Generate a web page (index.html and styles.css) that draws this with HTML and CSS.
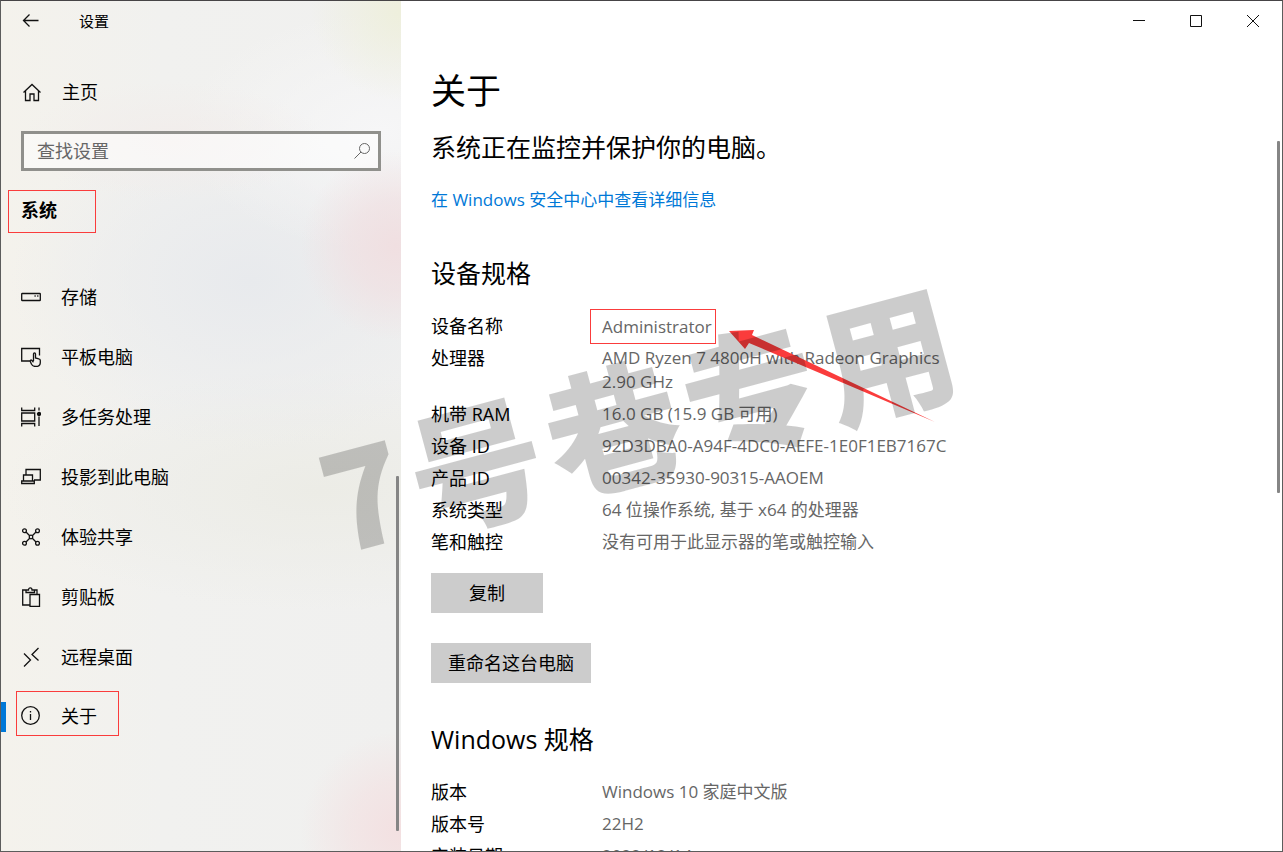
FILE: index.html
```html
<!DOCTYPE html>
<html lang="zh-CN">
<head>
<meta charset="utf-8">
<title>设置</title>
<meta name="viewport" content="width=device-width, initial-scale=1">
<link rel="stylesheet" href="styles.css">
</head>
<body>
<div class="window">
  <aside class="sidebar">
    <header class="titlebar">
      <button class="back" type="button" aria-label="返回">
        <svg class="icon" viewBox="0 0 20 20"><path d="M17.500 9.500H2.500M8.500 3.500l-6 6 6 6"/></svg>
      </button>
      <span class="app-title">设置</span>
    </header>
    <a class="home" href="#home">
      <svg class="icon" viewBox="0 0 20 20"><path d="M1.500 10.500L10 2.500l8.500 8M3.500 9v9.500h4.500v-6.500h4v6.500h4.500V9"/></svg>
      <span>主页</span>
    </a>
    <form class="search">
      <input class="search-input" type="text" placeholder="查找设置" aria-label="查找设置">
      <button class="search-button" type="button" aria-label="搜索">
        <svg class="icon" viewBox="0 0 20 20"><circle cx="12.500" cy="7.500" r="5"/><path d="M9 11L2.500 17.500"/></svg>
      </button>
    </form>
    <h2 class="category marked">系统</h2>
    <nav class="nav">
      <a class="nav-item" href="#storage">
        <svg class="icon" viewBox="0 0 20 20"><rect x=".7" y="6.500" width="18.600" height="7" rx=".6"/><path d="M13.500 9h1.200M16.200 9h1.200"/></svg>
        <span>存储</span>
      </a>
      <a class="nav-item" href="#tablet">
        <svg class="icon" viewBox="0 0 20 20"><path d="M9 14H.7V1.500h17.800V8.500M12.500 14V7c0-1.500 2-1.500 2 0V11l3.300.8c1 .2 1.500.8 1.500 1.700v2c0 2.500-1.800 4-4.500 4-2.200 0-3.500-.7-4.300-2.200L9.200 14.300c-.2-1 .7-1.700 1.500-1l1.800 2"/></svg>
        <span>平板电脑</span>
      </a>
      <a class="nav-item" href="#multitask">
        <svg class="icon" viewBox="0 0 20 20"><path d="M.7.500v3h13v-3M.7 19.500v-3h13v3M.7 6h13v8H.7zM18 .5v3M18 9.500v9.500"/><circle class="fill" cx="18" cy="7" r="1.500"/></svg>
        <span>多任务处理</span>
      </a>
      <a class="nav-item" href="#project">
        <svg class="icon" viewBox="0 0 20 20"><path d="M5 7.500V2.500h14.300v10.500H13M2.500 14V8h9v6M.7 14h12.600v2.500H.7z"/></svg>
        <span>投影到此电脑</span>
      </a>
      <a class="nav-item" href="#shared">
        <svg class="icon" viewBox="0 0 20 20"><circle cx="3.500" cy="3.800" r="1.900"/><circle cx="16.500" cy="3.800" r="1.900"/><circle cx="3.500" cy="16.200" r="1.900"/><circle cx="16.500" cy="16.200" r="1.900"/><circle cx="10" cy="10" r="1.800"/><path d="M5 5l3.700 3.700M15 5l-3.700 3.700M5 15l3.700-3.700M15 15l-3.700-3.700"/></svg>
        <span>体验共享</span>
      </a>
      <a class="nav-item" href="#clipboard">
        <svg class="icon" viewBox="0 0 20 20"><path d="M8.500 18H1.700V3H5M13 3h3v4.500M5 5.500V3h2.500C7.500.2 11 .2 11 3H13.500v2.500zM9 7.500h9.500v11.800H9z"/></svg>
        <span>剪贴板</span>
      </a>
      <a class="nav-item" href="#remote">
        <svg class="icon" viewBox="0 0 20 20"><path d="M17.500 1l-6.500 6.500L17.500 13.500M3 6.500l6.500 6.500L3 19.500"/></svg>
        <span>远程桌面</span>
      </a>
      <a class="nav-item current" href="#about" aria-current="page">
        <span class="marked about-mark">
          <svg class="icon" viewBox="0 0 20 20"><circle cx="9.500" cy="9.500" r="8.800"/><path d="M9.500 8v6M9.500 5v1.500"/></svg>
          <span>关于</span>
        </span>
      </a>
    </nav>
    <div class="thumb nav-thumb"></div>
  </aside>

  <main class="content">
    <div class="window-controls">
      <button type="button" aria-label="最小化"><svg viewBox="0 0 12 12"><path d="M0 5.500h12"/></svg></button>
      <button type="button" aria-label="最大化"><svg viewBox="0 0 12 12"><path d="M.5.500h11v11H.5z"/></svg></button>
      <button type="button" aria-label="关闭"><svg viewBox="0 0 12 12"><path d="M0 0l12 12M12 0L0 12"/></svg></button>
    </div>
    <h1 class="page-title">关于</h1>
    <p class="status">系统正在监控并保护你的电脑。</p>
    <a class="link" href="#security">在 Windows 安全中心中查看详细信息</a>

    <section class="section">
      <h2 class="section-title">设备规格</h2>
      <dl class="specs">
        <dt>设备名称</dt><dd><span class="marked name-mark">Administrator</span></dd>
        <dt>处理器</dt><dd>AMD Ryzen 7 4800H with Radeon Graphics<br>2.90 GHz</dd>
        <dt>机带 RAM</dt><dd>16.0 GB (15.9 GB 可用)</dd>
        <dt>设备 ID</dt><dd>92D3DBA0-A94F-4DC0-AEFE-1E0F1EB7167C</dd>
        <dt>产品 ID</dt><dd>00342-35930-90315-AAOEM</dd>
        <dt>系统类型</dt><dd>64 位操作系统, 基于 x64 的处理器</dd>
        <dt>笔和触控</dt><dd>没有可用于此显示器的笔或触控输入</dd>
      </dl>
      <div class="actions">
        <button class="button wide" type="button">复制</button>
        <button class="button" type="button">重命名这台电脑</button>
      </div>
    </section>

    <section class="section windows-section">
      <h2 class="section-title">Windows 规格</h2>
      <dl class="specs">
        <dt>版本</dt><dd>Windows 10 家庭中文版</dd>
        <dt>版本号</dt><dd>22H2</dd>
        <dt>安装日期</dt><dd>2022/12/14</dd>
      </dl>
    </section>
    <div class="thumb page-thumb"></div>
  </main>

  <svg class="arrow" viewBox="0 0 206 94" aria-hidden="true"><path d="M0 2L25 1 23 6 206 93 20 14 16 20z"/></svg>
  <div class="watermark"><span>7</span><span>号</span><span>巷</span><span>专</span><span>用</span></div>
</div>
</body>
</html>
```
FILE: styles.css
```css
* { box-sizing: border-box; }

body {
  margin: 0;
  background: #fff;
  color: #000;
  font: 400 18px/24px "Open Sans", "Noto Sans CJK SC", sans-serif;
}

h1, h2, p, dl, dd { margin: 0; font-weight: inherit; }
a { color: inherit; text-decoration: none; }
button { margin: 0; padding: 0; border: 0; background: none; color: inherit; font: inherit; }
svg { display: block; fill: none; stroke: #111; }

.window {
  position: relative;
  display: flex;
  height: 100vh;
  overflow: hidden;
  border: 1px solid #5c5c5c;
  border-top-color: #464446;
}

.icon { width: 20px; height: 20px; flex: none; stroke-width: 1.3; }
.fill { fill: #111; }
.marked { border: 1px solid #fa3c3c; }

.sidebar {
  position: relative;
  flex: none;
  width: 400px;
  background:
    radial-gradient(circle at 395px 245px, #f0dfe1 0, #f0dfe1aa 45px, #f0dfe100 95px),
    radial-gradient(circle at 400px 830px, #f3e0e1 0, #f3e0e199 50px, #f3e0e100 100px),
    radial-gradient(circle at 400px 10px, #eeefdc 0, #eeefdc00 90px),
    radial-gradient(ellipse 150px 60px at 170px 140px, #f2edeb 0, #f2edeb00 100%),
    radial-gradient(ellipse 200px 120px at 380px 130px, #f6f6f7 0, #f6f6f700 100%),
    radial-gradient(ellipse 240px 170px at 250px 280px, #e8eaed 0, #e8eaed00 100%),
    radial-gradient(ellipse 320px 120px at 320px 490px, #ecece6 0, #ecece600 100%),
    linear-gradient(90deg, #f4f2ec, #f1f1ef 40%, #f0f0ef);
}

.titlebar { display: flex; align-items: center; gap: 38px; height: 40px; padding-left: 20px; }
.app-title { font-size: 15px; }
.home { display: flex; align-items: center; gap: 20px; height: 60px; margin: 21px 0 9px; padding-left: 21px; }

.search {
  display: flex;
  align-items: center;
  height: 40px;
  margin: 0 20px;
  padding-right: 6px;
  border: 3px solid #90908c;
  background: #ffffff80;
}
.search-input { flex: 1; min-width: 0; padding: 0 13px; border: 0; outline: 0; background: none; font: inherit; }
.search-input::placeholder { color: #666; opacity: 1; }
.search-button .icon { stroke: #666; stroke-width: 1; }

.category { width: 88px; height: 43px; margin: 19px 0 34px 7px; padding: 7px 12px; font-size: 18px; font-weight: 700; }

.nav-item { display: flex; align-items: center; gap: 20px; height: 60px; padding-left: 20px; }
.current { padding-left: 0; gap: 0; }
.current::before { content: ""; width: 5px; height: 30px; background: #0078d7; }
.about-mark { display: flex; align-items: center; gap: 20px; width: 103px; height: 45px; margin: 0 0 8px 10px; padding: 6px 0 0 4px; }

.thumb { position: absolute; width: 3px; border-radius: 1px; background: #858585; }
.nav-thumb { right: 2px; top: 475px; bottom: 20px; }
.page-thumb { right: 2px; top: 140px; height: 352px; }

.content { position: relative; flex: 1; min-width: 0; padding-left: 30px; background: #fff; }
.window-controls { display: flex; justify-content: flex-end; height: 40px; padding-right: 1px; }
.window-controls button { display: grid; place-items: center; width: 57px; }
.window-controls svg { width: 12px; height: 12px; }

.page-title { margin-top: 26px; font-size: 35px; line-height: 48px; }
.status { margin-top: 15px; font-size: 25px; line-height: 34px; }
.link { display: inline-block; margin-top: 24px; color: #0078d7; font-size: 17px; }

.section { margin-top: 44px; }
.windows-section { margin-top: 39px; }
.section-title { font-size: 25px; line-height: 34px; }
.specs { display: grid; grid-template-columns: 171px 1fr; row-gap: 8px; margin-top: 24px; }
.specs dd { color: #666; font-size: 17px; }
.name-mark { display: block; width: 126px; height: 35px; margin: -5px 0 -6px -12px; padding: 5px 0 4px 11px; }

.actions { display: flex; flex-direction: column; align-items: flex-start; gap: 30px; margin-top: 19px; }
.button { height: 40px; padding: 0 17px; background: #ccc; }
.wide { padding: 0 38px; }

.arrow { position: absolute; left: 728px; top: 328px; width: 206px; height: 94px; stroke: none; fill: #fa3c3c; }

.watermark {
  position: absolute;
  left: 311px;
  top: 338px;
  display: flex;
  gap: 8px;
  color: #00000033;
  font: 900 134px/154px "Noto Sans CJK SC", sans-serif;
  transform: rotate(-15deg);
  pointer-events: none;
}
```
